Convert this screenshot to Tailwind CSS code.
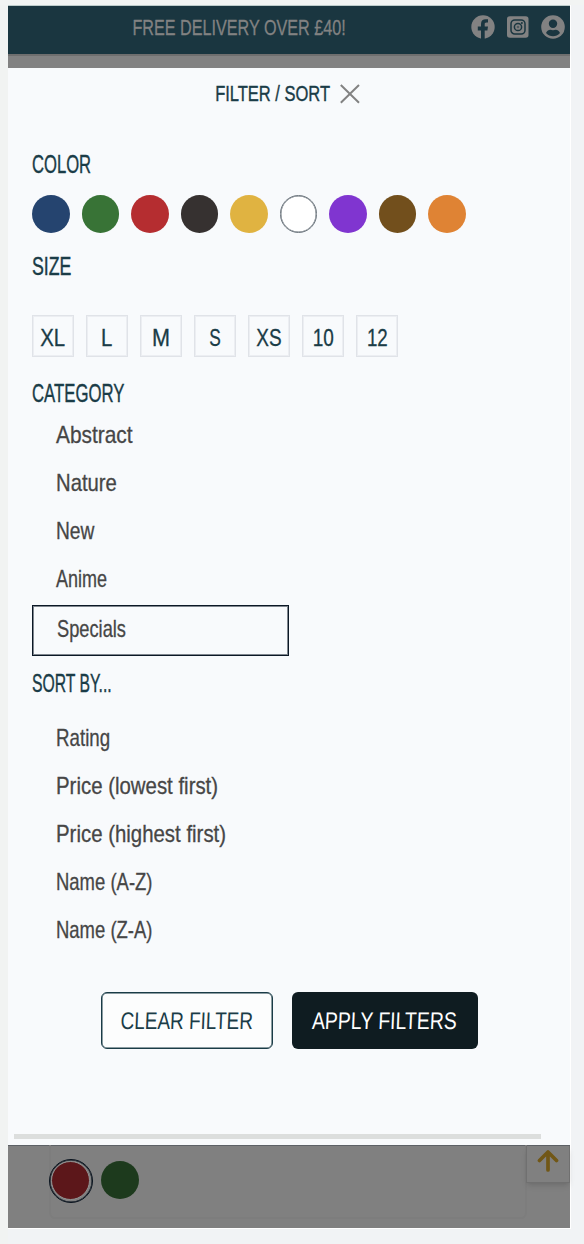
<!DOCTYPE html>
<html lang="en">
<head>
<meta charset="utf-8">
<title>Filter / Sort</title>
<script src="https://cdn.jsdelivr.net/npm/@tailwindcss/browser@4"></script>
</head>
<body class="h-[1244px] w-[584px] overflow-hidden bg-[#f1f3f5] font-['Liberation_Sans',sans-serif]">
<div class="h-[5px] bg-[#f2f4f3]"></div>
<div class="flex h-[1239px]">
  <div class="w-2 shrink-0 bg-[#f1f3f2]"></div>
  <main class="flex h-[1224px] w-[563px] shrink-0 flex-col border-r border-white">
    <header class="flex h-[49px] shrink-0 items-center border-t border-[#bdcccb] bg-[#1a3640] pb-1.5 text-[#828282]">
      <div class="flex w-[463px] justify-center whitespace-nowrap text-[22px]"><span class="inline-block scale-x-[.735] [-webkit-text-stroke:.3px]">FREE DELIVERY OVER £40!</span></div>
      <div class="flex items-center gap-3">
        <svg class="h-6 w-6" viewBox="0 0 24 24"><circle cx="12" cy="12" r="11.7" fill="currentColor"/><path d="M10 24v-8.500H6.800v-4H10V9c0-3.300 2-4.700 4.700-4.700h2.300v3.300h-1.500c-1.500 0-1.800.7-1.800 1.800v2.100H17l-.6 4h-2.700V24z" fill="#1a3640"/></svg>
        <svg class="h-6 w-[22px]" viewBox="0 0 22 24"><rect y="1.200" width="21.500" height="21.600" rx="2.800" fill="currentColor"/><rect x="4" y="5" width="14" height="14" rx="3.800" fill="none" stroke="#1a3640" stroke-width="1.500"/><circle cx="11" cy="12" r="3.600" fill="none" stroke="#1a3640" stroke-width="1.500"/><circle cx="11" cy="12" r="1.300" fill="#1a3640" opacity=".5"/><circle cx="14.900" cy="8.100" r="1" fill="#1a3640"/></svg>
        <svg class="h-6 w-6" viewBox="0 0 24 24"><circle cx="12" cy="12" r="11.800" fill="currentColor"/><circle cx="12" cy="8.700" r="4.200" fill="#1a3640"/><path d="M5 18c1-2.400 2.700-3.200 4.200-3.200.8.300 1.800.5 2.800.5s2-.2 2.800-.5c1.500 0 3.200.8 4.200 3.200-4 4.300-10 4.300-14 0z" fill="#1a3640"/></svg>
      </div>
    </header>
    <div class="h-[14px] shrink-0 border-t-2 border-[#6f6f6f] bg-[#828282]"></div>

    <section class="h-[1077px] shrink-0 bg-[#f8fafc] px-6 text-[#1a3c47]">
      <div class="-ml-6 flex h-[51px] items-center pl-[187px]">
        <h2 class="w-[155px] shrink-0 whitespace-nowrap text-center text-[22px]"><span class="inline-block scale-x-[.75] [-webkit-text-stroke:.4px]">FILTER / SORT</span></h2>
        <svg class="-ml-[10px] h-5 w-5" viewBox="0 0 20 20" fill="none" stroke="#828282" stroke-width="2"><path d="M.8 1 19 18.700M19 1 .8 18.700"/></svg>
      </div>

      <h3 class="mt-[29px] h-8 text-[25px] leading-8"><span class="inline-block origin-left scale-x-[.665] [-webkit-text-stroke:.4px]">COLOR</span></h3>
      <div class="mt-[15px] flex h-[38px] gap-3">
        <i class="size-[37.5px] rounded-full bg-[#25446f]"></i>
        <i class="size-[37.5px] rounded-full bg-[#387336]"></i>
        <i class="size-[37.5px] rounded-full bg-[#b52d30]"></i>
        <i class="size-[37.5px] rounded-full bg-[#363130]"></i>
        <i class="size-[37.5px] rounded-full bg-[#e0b341]"></i>
        <i class="size-[37.5px] rounded-full border border-[#6c757d] bg-white shadow-[inset_0_0_0_.5px_#6c757d]"></i>
        <i class="size-[37.5px] rounded-full bg-[#8035d0]"></i>
        <i class="size-[37.5px] rounded-full bg-[#724f1c]"></i>
        <i class="size-[37.5px] rounded-full bg-[#df8334]"></i>
      </div>

      <h3 class="mt-[17px] h-8 text-[25px] leading-8"><span class="inline-block origin-left scale-x-[.71] [-webkit-text-stroke:.4px]">SIZE</span></h3>
      <div class="mt-[33px] flex h-[43px] gap-3 text-2xl [-webkit-text-stroke:.3px]">
        <div class="flex size-[42px] items-center justify-center border border-[#e0e3e8] pt-[3px] shadow-[inset_0_0_0_1px_#eceef2]"><span class="scale-x-[.85]">XL</span></div>
        <div class="flex size-[42px] items-center justify-center border border-[#e0e3e8] pt-[3px] shadow-[inset_0_0_0_1px_#eceef2]"><span class="scale-x-[.85]">L</span></div>
        <div class="flex size-[42px] items-center justify-center border border-[#e0e3e8] pt-[3px] shadow-[inset_0_0_0_1px_#eceef2]"><span class="scale-x-[.9]">M</span></div>
        <div class="flex size-[42px] items-center justify-center border border-[#e0e3e8] pt-[3px] shadow-[inset_0_0_0_1px_#eceef2]"><span class="scale-x-[.72]">S</span></div>
        <div class="flex size-[42px] items-center justify-center border border-[#e0e3e8] pt-[3px] shadow-[inset_0_0_0_1px_#eceef2]"><span class="scale-x-[.79]">XS</span></div>
        <div class="flex size-[42px] items-center justify-center border border-[#e0e3e8] pt-[3px] shadow-[inset_0_0_0_1px_#eceef2]"><span class="scale-x-[.79]">10</span></div>
        <div class="flex size-[42px] items-center justify-center border border-[#e0e3e8] pt-[3px] shadow-[inset_0_0_0_1px_#eceef2]"><span class="scale-x-[.78]">12</span></div>
      </div>

      <h3 class="mt-[19px] h-8 text-[25px] leading-8"><span class="inline-block origin-left scale-x-[.67] [-webkit-text-stroke:.4px]">CATEGORY</span></h3>
      <ul class="mt-[2px] w-[257px] whitespace-nowrap text-2xl leading-[48px] text-[#464646] [-webkit-text-stroke:.3px]">
        <li class="h-12 pl-6"><span class="inline-block origin-left scale-x-[.87]">Abstract</span></li>
        <li class="h-12 pl-6"><span class="inline-block origin-left scale-x-[.845]">Nature</span></li>
        <li class="h-12 pl-6"><span class="inline-block origin-left scale-x-[.8]">New</span></li>
        <li class="h-12 pl-6"><span class="inline-block origin-left scale-x-[.75]">Anime</span></li>
        <li class="mt-[2px] h-[51px] border border-[#0b1826] pl-6 leading-[46px] shadow-[inset_0_0_0_1px_#7f868e]"><span class="inline-block origin-left scale-x-[.76]">Specials</span></li>
      </ul>

      <h3 class="mt-[11px] h-8 text-[25px] leading-8"><span class="inline-block origin-left scale-x-[.63] [-webkit-text-stroke:.4px]">SORT BY...</span></h3>
      <ul class="mt-[15px] whitespace-nowrap pl-6 text-2xl leading-[48px] text-[#464646] [-webkit-text-stroke:.3px]">
        <li class="h-12"><span class="inline-block origin-left scale-x-[.78]">Rating</span></li>
        <li class="h-12"><span class="inline-block origin-left scale-x-[.85]">Price (lowest first)</span></li>
        <li class="h-12"><span class="inline-block origin-left scale-x-[.85]">Price (highest first)</span></li>
        <li class="h-12"><span class="inline-block origin-left scale-x-[.77]">Name (A-Z)</span></li>
        <li class="h-12"><span class="inline-block origin-left scale-x-[.77]">Name (Z-A)</span></li>
      </ul>

      <div class="mt-[38px] flex h-[57px] gap-[19px] pl-[69px] text-2xl">
        <button class="flex w-[172px] items-center justify-center whitespace-nowrap rounded-md border border-[#1a3c47] bg-[#fcfdfd] shadow-[inset_0_0_0_.5px_#1a3c47]"><span class="scale-x-[.79] -skew-x-3">CLEAR FILTER</span></button>
        <button class="flex w-[185.5px] items-center justify-center whitespace-nowrap rounded-md bg-[#0f1c21] text-white"><span class="scale-x-[.81] -skew-x-3">APPLY FILTERS</span></button>
      </div>
      <div class="-ml-[18px] mt-[85px] h-[5px] w-[527px] bg-[#dcdedd]"></div>
    </section>

    <footer class="flex h-[83px] shrink-0 items-start border-t border-[#5d6166] bg-[#808080]">
      <div class="-mt-px ml-[41px] flex h-[74px] w-[478px] shrink-0 items-start rounded-b-md border-2 border-t-0 border-[#7d7d7d] pt-[14px]">
        <div class="-ml-[2.500px] -mt-[.5px] flex size-11 items-center justify-center rounded-full border border-[#08121d] shadow-[inset_0_0_0_.5px_#08121d]"><div class="size-[39px] rounded-full border border-[#929292] bg-[#5c171a]"></div></div>
        <i class="ml-[8px] mt-[2px] size-[38px] rounded-full bg-[#1d3a1d]"></i>
      </div>
      <div class="-ml-px flex h-[37px] w-11 items-start justify-center border border-t-0 border-[#707070] bg-[#808080] pt-[3px] shadow-md">
        <svg class="h-[23px] w-[22px]" viewBox="0 0 22 23" fill="none" stroke="#715716" stroke-width="3.700" stroke-linecap="round" stroke-linejoin="round"><path d="M11 21V3M2.500 11.500 11 3l8.500 8.500"/></svg>
      </div>
    </footer>
    <div class="h-px bg-white"></div>
  </main>
</div>
</body>
</html>
